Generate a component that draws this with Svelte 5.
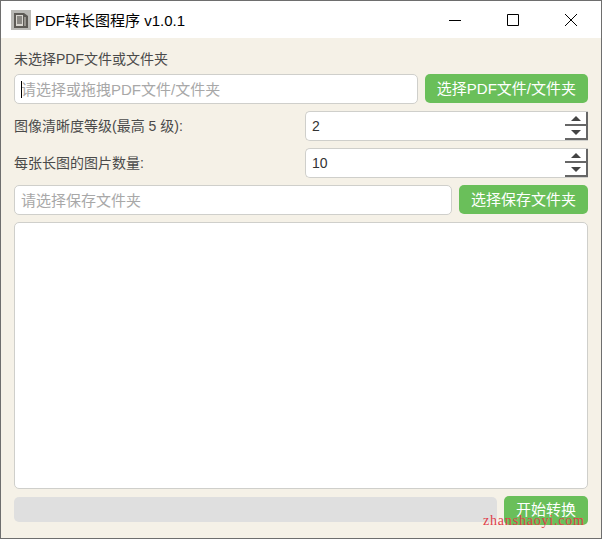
<script>
  // spin box values
  let quality = $state(2);
  let perImage = $state(10);
</script>

<div class="window">
  <header class="titlebar">
    <svg class="appicon" width="20" height="20" viewBox="0 0 20 20">
      <rect width="20" height="20" fill="#b9b9b5" />
      <path d="M3 3h10l4 3v12H3z" fill="#5c5a55" />
      <path d="M5 5h7v11H5z" fill="#d8d6d0" />
      <path d="M6 7h5M6 9h5M6 11h5M6 13h5" stroke="#3c3a36" stroke-width="1" />
      <path d="M13 7h2v9h-2z" fill="#96948e" />
    </svg>
    <span class="title">PDF转长图程序 v1.0.1</span>
    <div class="controls">
      <svg width="12" height="12" viewBox="0 0 12 12"><path d="M0 6.5h12" stroke="#000" /></svg>
      <svg width="12" height="12" viewBox="0 0 12 12"><path d="M.5.5h11v11H.5z" fill="none" stroke="#000" /></svg>
      <svg width="12" height="12" viewBox="0 0 12 12"><path d="M0 0l12 12M12 0L0 12" stroke="#000" /></svg>
    </div>
  </header>

  <main class="content">
    <div class="label first">未选择PDF文件或文件夹</div>
    <div class="row pick">
      <div class="field grow">
        <span class="caret"></span>
        <span class="placeholder">请选择或拖拽PDF文件/文件夹</span>
      </div>
      <button class="green">选择PDF文件/文件夹</button>
    </div>

    <div class="row spin-row">
      <span class="label">图像清晰度等级(最高 5 级):</span>
      <div class="spin">
        <span class="value">{quality}</span>
        <div class="arrows">
          <button class="arrow" aria-label="up"><i class="up"></i></button>
          <button class="arrow" aria-label="down"><i class="down"></i></button>
        </div>
      </div>
    </div>

    <div class="row spin-row">
      <span class="label">每张长图的图片数量:</span>
      <div class="spin">
        <span class="value">{perImage}</span>
        <div class="arrows">
          <button class="arrow" aria-label="up"><i class="up"></i></button>
          <button class="arrow" aria-label="down"><i class="down"></i></button>
        </div>
      </div>
    </div>

    <div class="row">
      <div class="field grow">
        <span class="placeholder">请选择保存文件夹</span>
      </div>
      <button class="green">选择保存文件夹</button>
    </div>

    <div class="log"></div>

    <div class="row bottom">
      <div class="progress"></div>
      <button class="green start">开始转换</button>
      <span class="watermark">zhanshaoyi.com</span>
    </div>
  </main>
</div>

<style>
  :global(body) {
    margin: 0;
  }

  .window {
    width: 602px;
    height: 539px;
    box-sizing: border-box;
    border: 1px solid #6e6e6e;
    display: flex;
    flex-direction: column;
    font-family: "Liberation Sans", "Noto Sans CJK SC", sans-serif;
    overflow: hidden;
  }

  .titlebar {
    height: 37px;
    flex: none;
    background: #fff;
    display: flex;
    align-items: center;
    padding-left: 10px;
  }

  .appicon {
    margin-right: 4px;
  }

  .title {
    font-size: 15px;
    color: #000;
  }

  .controls {
    margin-left: auto;
    display: flex;
    gap: 46px;
    padding-right: 24px;
  }

  .content {
    flex: 1;
    background: #f5f1e7;
    padding: 0 13px;
    display: flex;
    flex-direction: column;
    gap: 7px;
    min-height: 0;
  }

  .label {
    font-size: 14px;
    color: #4a4a4a;
    line-height: 20px;
  }

  .label.first {
    margin-top: 11px;
    margin-bottom: -2px;
  }

  .row {
    display: flex;
    gap: 7px;
    height: 30px;
    align-items: flex-start;
    flex: none;
  }

  .spin-row {
    justify-content: space-between;
    align-items: center;
  }

  .field {
    height: 30px;
    box-sizing: border-box;
    background: #fff;
    border: 1px solid #cfcfcb;
    border-radius: 5px;
    display: flex;
    align-items: center;
    padding: 0 0 2px 6px;
    position: relative;
  }

  .grow {
    flex: 1;
  }

  .caret {
    position: absolute;
    left: 6px;
    top: 6px;
    width: 1px;
    height: 17px;
    background: #000;
  }

  .placeholder {
    font-size: 15px;
    color: #a8a8a8;
  }

  .green {
    height: 29px;
    background: #6abf5a;
    color: #fff;
    border: 0;
    border-radius: 5px;
    padding: 0 12px 2px;
    font-family: inherit;
    font-size: 15px;
    white-space: nowrap;
  }

  .spin {
    width: 283px;
    height: 30px;
    box-sizing: border-box;
    background: #fff;
    border: 1px solid #cfcfcb;
    border-right: 0;
    border-radius: 5px 0 0 5px;
    display: flex;
    align-items: center;
    padding-left: 6px;
  }

  .value {
    font-size: 14px;
    color: #333;
  }

  .arrows {
    margin-left: auto;
    width: 23px;
    height: 28px;
    display: flex;
    flex-direction: column;
  }

  .arrow {
    flex: 1;
    padding: 0;
    background: #fff;
    border: 0;
    border-right: 2px solid #666;
    border-bottom: 2px solid #666;
    display: flex;
    align-items: center;
    justify-content: center;
  }

  .up,
  .down {
    width: 0;
    height: 0;
    border-left: 5px solid transparent;
    border-right: 5px solid transparent;
  }

  .up {
    border-bottom: 5px solid #444;
  }

  .down {
    border-top: 5px solid #444;
  }

  .log {
    height: 267px;
    flex: none;
    box-sizing: border-box;
    background: #fff;
    border: 1px solid #cfcfcb;
    border-radius: 5px;
  }

  .bottom {
    position: relative;
    height: 29px;
  }

  .progress {
    flex: 1;
    height: 25px;
    margin-top: 1px;
    background: #dfdfdf;
    border-radius: 5px;
  }

  .start {
    width: 84px;
    padding: 0 0 4px;
    font-size: 15px;
  }

  .watermark {
    position: absolute;
    left: 469px;
    top: 17px;
    font-family: "Liberation Serif", serif;
    font-size: 14px;
    letter-spacing: 0.8px;
    color: #e0404a;
  }
</style>
